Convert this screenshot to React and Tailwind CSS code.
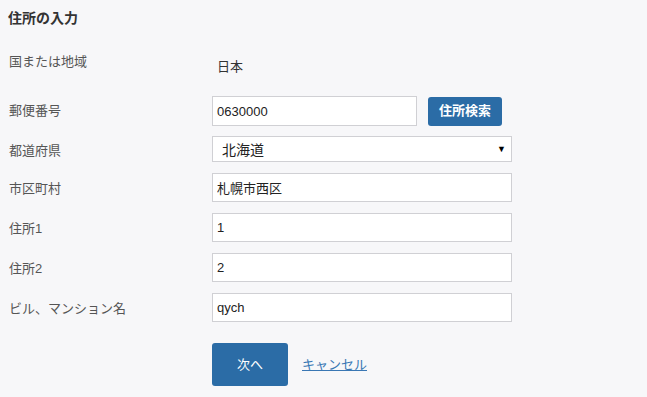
import { useState } from 'react'

const font = { fontFamily: '"Liberation Sans", "Noto Sans CJK JP", sans-serif' }

const rows = [
	{ label: '市区町村', name: 'city', value: '札幌市西区' },
	{ label: '住所1', name: 'addr1', value: '1' },
	{ label: '住所2', name: 'addr2', value: '2' },
	{ label: 'ビル、マンション名', name: 'building', value: 'qych' },
]

export default function App() {
	const [form, setForm] = useState({ zip: '0630000', pref: '北海道', city: '札幌市西区', addr1: '1', addr2: '2', building: 'qych' })

	const update = name => e => setForm({ ...form, [name]: e.target.value })

	return (
		<div className="min-h-screen w-full bg-[#f7f7f9] text-[13px] text-[#555]" style={font}>
			{/* Title */}
			<div className="h-[36px] flex items-center pl-[8px] text-[14px] font-bold text-[#333]">住所の入力</div>

			{/* Country */}
			<div className="h-[50px] flex items-start">
				<div className="w-[212px] pl-[9px] pt-[18px] leading-[16px]">国または地域</div>
				<div className="pl-[5px] pt-[23px] leading-[16px] text-[#333]">日本</div>
			</div>

			{/* Postal code */}
			<div className="mt-[10px] h-[30px] flex items-center">
				<div className="w-[212px] pl-[9px]">郵便番号</div>
				<input value={form.zip} onChange={update('zip')} className="w-[205px] h-[30px] bg-white border border-[#d0d0d4] pl-[4px] text-[#222] outline-none" />
				<button className="ml-[11px] w-[74px] h-[29px] rounded-[3px] bg-[#2b6ca6] text-white font-bold text-[13px]">住所検索</button>
			</div>

			{/* Prefecture */}
			<div className="mt-[10px] h-[26px] flex items-center">
				<div className="w-[212px] pl-[9px] pt-[3px]">都道府県</div>
				<div className="relative w-[300px] h-[26px]">
					<select value={form.pref} onChange={update('pref')} className="appearance-none w-full h-full bg-white border border-[#d0d0d4] pl-[9px] pt-[3px] text-[14px] text-[#222] outline-none">
						<option>北海道</option>
						<option>青森県</option>
						<option>岩手県</option>
					</select>
					<span className="absolute right-[6px] top-[7px] text-[9px] text-black pointer-events-none">▼</span>
				</div>
			</div>

			{/* Text inputs */}
			{rows.map(r => (
				<div key={r.name} className="mt-[11px] h-[29px] flex items-center">
					<div className="w-[212px] pl-[9px] pt-[3px]">{r.label}</div>
					<input value={form[r.name]} onChange={update(r.name)} className="w-[300px] h-[29px] bg-white border border-[#d0d0d4] pl-[4px] text-[#222] outline-none" />
				</div>
			))}

			{/* Actions */}
			<div className="mt-[21px] flex items-center pl-[212px]">
				<button className="w-[76px] h-[43px] rounded-[3px] bg-[#2b6ca6] text-white text-[13px]">次へ</button>
				<a href="#" className="ml-[14px] text-[#3a77b4] underline">キャンセル</a>
			</div>
		</div>
	)
}
